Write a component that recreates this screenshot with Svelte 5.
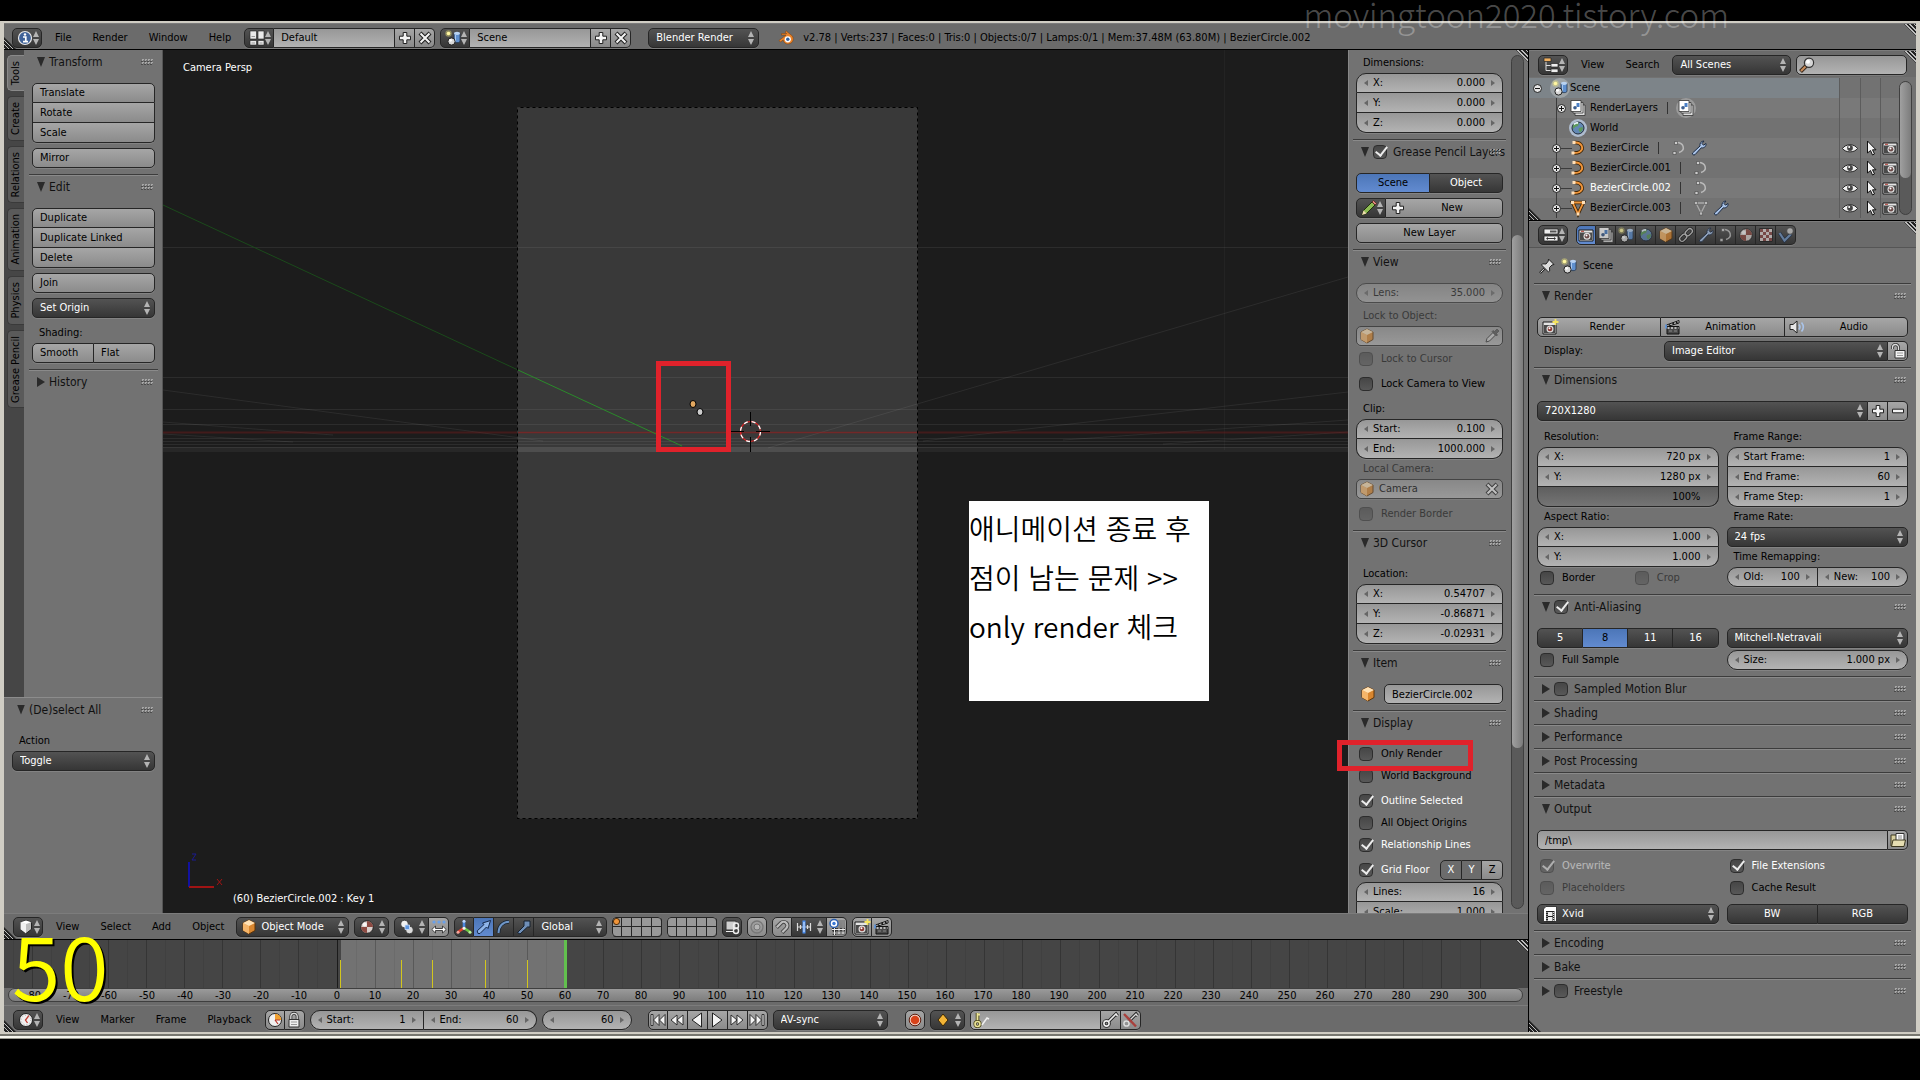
<!--
	Workspace: info bar, 3D view with tool shelf and properties region,
	timeline, outliner and render properties.
-->
<script lang="ts">
	const icons: Record<string, string> = {
		info: '<circle cx="8" cy="8" r="6.5" fill="#3f6299" stroke="#e8e8e8" stroke-width="1.2"/><path d="M6 7h2.8v4.5M6 11.7h5" stroke="#fff" stroke-width="1.7" fill="none"/><circle cx="8" cy="4.5" r="1.2" fill="#fff"/>',
		screen: '<path d="M1 1h6.500v8H1zM9 1h6v8H9zM1 10.500h6.500V15H1zM9 10.500h6V15H9z" fill="#e9e9e9" stroke="#222" stroke-width=".6"/><path d="M2.500 6.500h3.500M2.500 13h3.500M10.500 13h3" stroke="#999"/>',
		scene: '<circle cx="3.500" cy="3.500" r="3.200" fill="#e9e27a" opacity=".45"/><circle cx="3.500" cy="3.500" r="1.800" fill="#fff6a0"/><path d="M9 3.500v8c1 1.600 5 1.600 6 0v-8z" fill="#5f90cf" stroke="#26364d" stroke-width=".8"/><ellipse cx="12" cy="3.300" rx="3" ry="1.600" fill="#b9d3f2"/><path d="M10.500 5v6.500" stroke="#a9c8ee"/><circle cx="6.500" cy="11.500" r="3.600" fill="#d9d9d9" stroke="#222"/><circle cx="5.500" cy="10.300" r="1.400" fill="#fff"/>',
		plus: '<path d="M6.200 2.500h3.600v3.700h3.700v3.600H9.800v3.700H6.200V9.800H2.500V6.200h3.700z" fill="#f4f4f4" stroke="#222"/>',
		minus: '<path d="M2.500 6.200h11v3.600h-11z" fill="#f4f4f4" stroke="#222"/>',
		close: '<path d="M3 3l10 10M13 3L3 13" stroke="#222" stroke-width="4.200"/><path d="M3.500 3.500l9 9M12.500 3.500l-9 9" stroke="#f4f4f4" stroke-width="2"/>',
		blender: '<path d="M1 10.500l7-5.400H3.500V3.600h5.200L7 2.200 8.300 1l6 5c2 3 .6 6.500-2.300 7.600-3.400 1.200-6.500-.8-6.800-3.600L2.500 12z" fill="#e8822a" stroke="#7a3c08" stroke-width=".5"/><circle cx="9.800" cy="9.300" r="3.100" fill="#fff"/><circle cx="9.800" cy="9.300" r="1.700" fill="#2f62a3"/>',
		view3d: '<path d="M8 1.500l5.500 1.800v7L8 14.500l-5.500-4.200v-7z" fill="#bdbdbd" stroke="#222"/><path d="M8 5v9.500l-5.500-4.200v-7z" fill="#f1f1f1"/><path d="M2.500 3.300L8 1.500l5.500 1.800L8 5z" fill="#fff"/>',
		cube: '<path d="M8 1l6 3v7.500L8 15l-6-3.500V4z" fill="#d8862f" stroke="#5e3409"/><path d="M8 7v8l-6-3.500V4z" fill="#f4b56a"/><path d="M2 4l6-3 6 3-6 3z" fill="#ffe1b4"/>',
		material: '<circle cx="8" cy="8" r="6.300" fill="#d9cfcb" stroke="#222"/><path d="M8 2a6 6 0 0 1 6 6H8zM8 14a6 6 0 0 1-6-6h6z" fill="#8d4a42"/><circle cx="5.800" cy="5.400" r="2" fill="#fff" opacity=".8"/>',
		pivot: '<circle cx="5.500" cy="5" r="3.800" fill="#f1f1f1" stroke="#222" stroke-width=".7"/><circle cx="10.500" cy="11" r="3.800" fill="#dcdcdc" stroke="#222" stroke-width=".7"/><path d="M6 6h4.500v4.500H6z" fill="#5f97e0" stroke="#cfe0fa" stroke-width=".8"/>',
		centers: '<circle cx="3" cy="3" r="1.600" fill="#6aa0e8"/><circle cx="8" cy="3" r="1.600" fill="#6aa0e8"/><circle cx="13" cy="3" r="1.600" fill="#6aa0e8"/><path d="M.8 10.500L4.500 7v2.500h7V7l3.700 3.500-3.700 3.500v-2.500h-7V14z" fill="#fff" stroke="#222" stroke-width=".8"/>',
		axes: '<path d="M8 2v7" stroke="#4b86dd" stroke-width="2.600"/><path d="M8 9l-6 4" stroke="#e0402e" stroke-width="2.600"/><path d="M8 9l6 4" stroke="#6cc644" stroke-width="2.600"/><circle cx="8" cy="9.300" r="1.500" fill="#f2f2f2"/><circle cx="8" cy="2.200" r="1.500" fill="#bcd5fa"/><circle cx="2" cy="13.300" r="1.500" fill="#f6a59b"/><circle cx="14" cy="13.300" r="1.500" fill="#b7f09a"/>',
		translate: '<path d="M2 14.500l-.8-2.600L8 5.500 6.500 4 14.500 1.500 12 9.500 10.500 8 4 14.500z" fill="#8fb5ea" stroke="#14284a"/>',
		rotate: '<path d="M2.500 14C2.500 7.500 6.500 3 13 2.800" stroke="#14202f" stroke-width="3.600" fill="none"/><path d="M2.500 14C2.500 7.500 6.500 3 13 2.800" stroke="#6f96c7" stroke-width="2" fill="none"/>',
		scale: '<path d="M8 2h6v6H11.500L4 15 1.500 13.500 8 7z" fill="#6f8fb8" stroke="#14202f"/>',
		layerlock: '<path d="M2 2h10v9H2z" fill="#cfcfcf" stroke="#333"/><path d="M2 12.500h7" stroke="#eee"/><rect x="9.500" y="4" width="5" height="5.500" rx="2.500" fill="none" stroke="#eee" stroke-width="1.400"/><rect x="9.500" y="9" width="5" height="5.500" rx="2.500" fill="none" stroke="#eee" stroke-width="1.400"/>',
		proportional: '<circle cx="8" cy="8" r="6" fill="none" stroke="#777" stroke-width="1.300"/><circle cx="8" cy="8" r="3" fill="#b5b5b5" stroke="#777"/>',
		magnet: '<path d="M2.500 8.500L7 4a3.700 3.700 0 0 1 5.300 5.300L8 13.700" stroke="#444" stroke-width="4" fill="none"/><path d="M2.800 8.200L7 4a3.700 3.700 0 0 1 5.300 5.300L8.300 13.300" stroke="#bdbdbd" stroke-width="2.200" fill="none"/>',
		increment: '<path d="M1.500 4v8M4.500 6v4M11.500 6v4M14.500 4v8M1 8h14" stroke="#ddd" stroke-width="1.200"/><path d="M8 1.500v13" stroke="#4b8ff0" stroke-width="3"/><path d="M8 3v10" stroke="#e3eeff"/>',
		snapgrid: '<path d="M10 1v14M14 1v14M3 10.500h13M3 14h13M5.500 9v7" stroke="#222" stroke-width="2.400"/><path d="M10 1v14M14 1v14M3 10.500h13M3 14h13M5.500 9v7" stroke="#eee"/><circle cx="5" cy="4.500" r="4" fill="#fff" stroke="#2b5fb0" stroke-width="1.500"/><circle cx="5" cy="4.500" r="1.700" fill="#3a78d6"/>',
		camera: '<path d="M1 3h14v11H1z" fill="#e4e4e4" stroke="#1b1b1b"/><path d="M2 5.500h12V13H2z" fill="#4a4a4a"/><path d="M3 4.300h3" stroke="#b03a30"/><circle cx="9" cy="9.200" r="3.500" fill="#ddd"/><circle cx="9" cy="9.200" r="2.300" fill="#6b4a48"/><circle cx="8.500" cy="8.500" r="1" fill="#fff"/>',
		cameranew: '<path d="M1 3h13v12H1z" fill="#e4e4e4" stroke="#1b1b1b"/><path d="M2 6h11v8H2z" fill="#4a4a4a"/><circle cx="8" cy="10" r="3.500" fill="#ddd"/><circle cx="8" cy="10" r="2.300" fill="#8c3a34"/><circle cx="7.500" cy="9.300" r="1" fill="#fff"/><path d="M13.500 0v6M10.500 3h6" stroke="#f5e35c" stroke-width="1.800"/>',
		clapper: '<path d="M2 7.500h12V15H2z" fill="#4a4a4a" stroke="#111"/><path d="M1.500 6L14 1.500V4L2 7.500z" fill="#eee" stroke="#111"/><path d="M4 5.500l1.500 1M7.500 4.200L9 5.400M11 3l1.500 1.200" stroke="#111" stroke-width="1.500"/><path d="M2.500 9h11" stroke="#ddd" stroke-width="1.400" stroke-dasharray="2 1.500"/><path d="M4 12h3M9 12h3" stroke="#888"/><path d="M1 5.500v4" stroke="#5a96e4" stroke-width="1.600"/>',
		clock: '<circle cx="8" cy="8" r="6.500" fill="#f0f0f0" stroke="#222"/><path d="M11 3.500L7.500 8 9.500 11" stroke="#c23b32" stroke-width="1.300" fill="none"/><circle cx="8" cy="8" r="4.800" fill="none" stroke="#999" stroke-width=".8" stroke-dasharray="1 2"/>',
		clockrange: '<circle cx="8" cy="8" r="6.500" fill="#f0f0f0" stroke="#222"/><path d="M8 8V1.700A6.300 6.300 0 0 1 14.300 8z" fill="#f0a030"/><path d="M8 8h5M8 8l3 4" stroke="#b7362c" stroke-width="1.200"/>',
		lock: '<path d="M4.800 8V4.500a3.200 3.200 0 0 1 6.400 0V8" fill="none" stroke="#333" stroke-width="3"/><path d="M4.800 8V4.500a3.200 3.200 0 0 1 6.400 0V8" fill="none" stroke="#ddd" stroke-width="1.300"/><path d="M3 7.500h10V15H3z" fill="#eee" stroke="#333"/><path d="M5 10h6M5 12.500h6" stroke="#999"/>',
		unlock: '<path d="M8.500 8V4.500a3 3 0 0 0-6 0V6" fill="none" stroke="#333" stroke-width="3"/><path d="M8.500 8V4.500a3 3 0 0 0-6 0V6" fill="none" stroke="#ddd" stroke-width="1.300"/><path d="M5 7.500h10V15H5z" fill="#f2f2f2" stroke="#333"/><path d="M7 10h6M7 12.500h6" stroke="#999"/>',
		first: '<path d="M1 2.500h2v11H1zM9 2.500v11L3.500 8zM15 2.500v11L9.500 8z" fill="#f4f4f4" stroke="#222" stroke-width=".9"/>',
		prevkey: '<path d="M8 3v10L2 8zM14 3v10L8 8z" fill="#f4f4f4" stroke="#222" stroke-width=".9"/>',
		reverse: '<path d="M12.500 1v14L3 8z" fill="#f4f4f4" stroke="#222"/>',
		play: '<path d="M3.500 1v14L13 8z" fill="#f4f4f4" stroke="#222"/>',
		nextkey: '<path d="M2 3v10l6-5zM8 3v10l6-5z" fill="#f4f4f4" stroke="#222" stroke-width=".9"/>',
		last: '<path d="M13 2.500h2v11h-2zM1 2.500v11L6.500 8zM7 2.500v11L12.500 8z" fill="#f4f4f4" stroke="#222" stroke-width=".9"/>',
		record: '<circle cx="8" cy="8" r="5.800" fill="#efd2c8" stroke="#5e1d0d"/><circle cx="8" cy="8" r="4.300" fill="#d8431a"/>',
		diamond: '<path d="M8 2l5 6-5 6-5-6z" fill="#f2b436" stroke="#3a2705"/>',
		keyset: '<path d="M4.500 1v9" stroke="#4a4518" stroke-width="3.600"/><path d="M4.500 1v9M4.500 2.500H7" stroke="#ece59a" stroke-width="1.800"/><circle cx="4.500" cy="12" r="2.500" fill="none" stroke="#4a4518" stroke-width="3.200"/><circle cx="4.500" cy="12" r="2.500" fill="none" stroke="#ece59a" stroke-width="1.600"/><path d="M9 13l5-7 2 1" stroke="#eee" stroke-width="1.500" fill="none"/>',
		key: '<path d="M6.500 9.500L14 2l1.500 2" stroke="#222" stroke-width="3.400" fill="none"/><circle cx="4.500" cy="11.500" r="2.600" fill="none" stroke="#222" stroke-width="3.400"/><path d="M6.500 9.500L14 2l1.500 2" stroke="#eee" stroke-width="1.600" fill="none"/><circle cx="4.500" cy="11.500" r="2.600" fill="none" stroke="#eee" stroke-width="1.600"/>',
		keydel: '<path d="M6.500 9.500L14 2l1.500 2" stroke="#222" stroke-width="3.200" fill="none"/><path d="M6.500 9.500L14 2l1.500 2" stroke="#ddd" stroke-width="1.400" fill="none"/><circle cx="4.500" cy="11.500" r="2.600" fill="none" stroke="#ddd" stroke-width="1.500"/><path d="M2 2l12 12.500" stroke="#a8403c" stroke-width="2.400"/>',
		outliner: '<path d="M3 4v9.500h5M3 8.500h5" stroke="#ddd" fill="none"/><path d="M1 1h7v3.500H1z" fill="#f0b060" stroke="#222" stroke-width=".7"/><path d="M8 6.500h7V10H8zM8 12h7v3.500H8z" fill="#eee" stroke="#222" stroke-width=".7"/>',
		search: '<path d="M7 9L1.500 14.500" stroke="#3a2a1c" stroke-width="4"/><path d="M7 9L2 14" stroke="#c98d5c" stroke-width="2"/><circle cx="10" cy="5.800" r="4.600" fill="#d6d6d6" stroke="#333" stroke-width="1.200"/><circle cx="9" cy="4.800" r="2" fill="#fff"/>',
		layers: '<path d="M5 5h10v10.500H5z" fill="#ddd" stroke="#333" stroke-width=".8"/><path d="M3 2.500h10V13H3z" fill="#eee" stroke="#333" stroke-width=".8"/><path d="M1 .5h10v11H1z" fill="#fff" stroke="#333" stroke-width=".8"/><path d="M6.500 3h3v4h-3z" fill="#4b80c6"/><circle cx="5" cy="7.800" r="1.800" fill="#3d5f8f"/>',
		world: '<circle cx="8" cy="8" r="6" fill="#6288b4" stroke="#222b38"/><path d="M4 4c2-2 4-2 5-1L8 6 5 7 3.500 9C2 7 3 5 4 4zM9 8l3.500-1c1 2-.5 4.500-2.500 5.500L8.500 10z" fill="#5d9a5c"/><path d="M4 4.500C5 3 7 2.800 8 3" stroke="#e7f1fa" stroke-width="1.800" fill="none"/>',
		curve: '<path d="M4.500 2.500C12 2 14.500 9 9.500 12 8 13 6 13 4 13" stroke="#3b2204" stroke-width="3.400" fill="none"/><path d="M4.500 2.500C12 2 14.500 9 9.500 12 8 13 6 13 4 13" stroke="#f0953a" stroke-width="1.900" fill="none"/><path d="M2.500 1h3v3h-3zM1.500 11.500h3v3h-3z" fill="#ffe0b8"/>',
		curvedata: '<path d="M5 2.500C13 2 15 10.500 8 12.500" stroke="#b9b9b9" stroke-width="1.500" fill="none"/><path d="M3.500 1.500h3v3h-3zM2 11.500h3v3H2z" fill="#ccc" stroke="#444" stroke-width=".6"/>',
		mesh: '<path d="M2.500 2.500h11L8 14z" fill="none" stroke="#3b2204" stroke-width="3.400"/><path d="M2.500 2.500h11L8 14z" fill="none" stroke="#f0953a" stroke-width="1.800"/><path d="M1 1h3v3H1zM12 1h3v3h-3zM6.500 12.500h3v3h-3z" fill="#ffe0b8"/>',
		meshdata: '<path d="M3 3h10L8 13z" fill="none" stroke="#aaa" stroke-width="1.300"/><path d="M1.500 1.500h3v3h-3zM11.500 1.500h3v3h-3zM6.500 12h3v3h-3z" fill="#bbb" stroke="#444" stroke-width=".5"/>',
		wrench: '<path d="M1.500 13L9 6c-.6-2.600 1.200-5 4-5L11 3.500l1.500 1.700L15 3.500c.5 2.800-2 5-4.700 4.300L4 14.700C2.500 15.500.8 14.500 1.500 13z" fill="#a9c3e8" stroke="#1d2c44"/>',
		eye: '<path d="M.5 8.500C3.500 3.500 12.500 3.500 15.500 8.500 12.500 13 3.500 13 .5 8.500z" fill="#f0f0f0" stroke="#222"/><circle cx="8" cy="8" r="2.900" fill="#444"/><circle cx="7.200" cy="7" r="1" fill="#fff"/>',
		pointer: '<path d="M4.500 1v12l3-2.500 2 4.500 2-1-2-4.200h3.500z" fill="#f4f4f4" stroke="#111"/>',
		properties: '<path d="M1 2h14v5H1zM1 9h14v5H1z" fill="#eee" stroke="#222" stroke-width=".8"/><path d="M7 3.500h6.500v2H7z" fill="#555"/><path d="M3 11.500l2-1.500v3zM13 11.500L11 10v3z" fill="#333"/><path d="M5 11.500h6" stroke="#333"/>',
		link: '<g transform="rotate(-45 8 8)" fill="none"><rect x="0" y="5.500" width="8" height="5" rx="2.500" stroke="#222" stroke-width="3"/><rect x="8" y="5.500" width="8" height="5" rx="2.500" stroke="#222" stroke-width="3"/><rect x="0" y="5.500" width="8" height="5" rx="2.500" stroke="#c8c8c8" stroke-width="1.300"/><rect x="8" y="5.500" width="8" height="5" rx="2.500" stroke="#c8c8c8" stroke-width="1.300"/></g>',
		texture: '<path d="M1.500 1.500h13v13h-13z" fill="#e0d6d4" stroke="#222"/><path d="M2 2h3v3H2zM8 2h3v3H8zM5 5h3v3H5zM11 5h3v3h-3zM2 8h3v3H2zM8 8h3v3H8zM5 11h3v3H5zM11 11h3v3h-3z" fill="#8d4a48"/>',
		physics: '<path d="M1.500 6l5 7.500L13 7" stroke="#1d2c44" stroke-width="3.600" fill="none"/><path d="M1.500 6l5 7.500L13 7" stroke="#7296c4" stroke-width="2.200" fill="none"/><circle cx="12" cy="4" r="3.300" fill="#cfcfcf" stroke="#333" stroke-width=".7"/>',
		pin: '<path d="M5.500 10.500L1 15" stroke="#222" stroke-width="2.400"/><path d="M9.500 1l5.500 5.500-2 .5-2.500 2.500.2 3.500-1.200 1L2.500 7l1-1.200 3.500.2L9.200 3.200z" fill="#ddd" stroke="#222"/><path d="M5 10.800L1.500 14.500" stroke="#ddd"/>',
		speaker: '<path d="M1 5.500h3L8 2v12l-4-3.500H1z" fill="#e6e6e6" stroke="#222"/><path d="M10 5.500c1.200 1.500 1.200 3.500 0 5M12.500 3.500c2.200 2.700 2.200 6.300 0 9" stroke="#a9c3e8" stroke-width="1.600" fill="none"/>',
		folder: '<path d="M1 3h5l1 1.500V14H1z" fill="#d8cf9e" stroke="#3c3820"/><path d="M6 1.500h8V10H6z" fill="#fff" stroke="#333"/><path d="M8 4h4M8 6h4" stroke="#888"/><path d="M3 8h12.500L14 14.500H1.500z" fill="#e6deb2" stroke="#3c3820"/>',
		film: '<path d="M4 .5h10.500v15H1.500V3z" fill="#fff" stroke="#222" stroke-width=".8"/><path d="M4 5h8.500v10.500H4z" fill="#222"/><path d="M6 6h4.500v4H6zM6 11h4.500v4H6z" fill="#eee"/><path d="M5 6v9M11.600 6v9" stroke="#eee" stroke-dasharray="1 1"/>',
		pencil: '<path d="M1 15l1.500-4.500L11 2l3 3-8.500 8.500z" fill="#8dbb54" stroke="#20300c"/><path d="M11 2l1.500-1.500 3 3L14 5z" fill="#e08a80" stroke="#4a1a14" stroke-width=".7"/><path d="M1 15l1.500-4.500 3 3z" fill="#f0dcb0"/>',
		dropper: '<path d="M2 14l1-3.500L9 4.500l2.500 2.500-6 6z" fill="#ccc" stroke="#333"/><path d="M8 3.500l1-1 1.500 1L13 1l2 2-2.500 2.500 1 1.500-1 1z" fill="#555" stroke="#333" stroke-width=".6"/>'
	};

	const tabs = ['Tools', 'Create', 'Relations', 'Animation', 'Physics', 'Grease Pencil'];
	const contexts = ['camera', 'layers', 'scene', 'world', 'cube', 'link', 'wrench', 'curvedata', 'material', 'texture', 'physics'];
	const contextNames = ['Render', 'Render layers', 'Scene', 'World', 'Object', 'Constraints', 'Modifiers', 'Data', 'Material', 'Texture', 'Physics'];
	const objects = [
		{ name: 'BezierCircle', glyph: 'curve', extra: ['curvedata', 'wrench'] },
		{ name: 'BezierCircle.001', glyph: 'curve', extra: ['curvedata'] },
		{ name: 'BezierCircle.002', glyph: 'curve', extra: ['curvedata'], active: true },
		{ name: 'BezierCircle.003', glyph: 'mesh', extra: ['meshdata', 'wrench'] }
	];
	const transport = [
		['first', 'Jump to start'],
		['prevkey', 'Previous keyframe'],
		['reverse', 'Play reverse'],
		['play', 'Play'],
		['nextkey', 'Next keyframe'],
		['last', 'Jump to end']
	];

	// timeline: frame number -> share of the strip's width
	const at = (frame: number, step = 3.81) => `${((333 + frame * step) / 1524) * 100}%`;
	const ticks = Array.from({ length: 78 }, (_, i) => (i - 17) * 5);
	const labels = Array.from({ length: 39 }, (_, i) => (i - 8) * 10);
	const keys = [1, 17, 25, 39, 50];

	const gridRows = [197, 327, 359, 374, 388, 391, 394, 397];
</script>

{#snippet icon(name)}
	<svg class="icon" viewBox="0 0 16 16" aria-hidden="true">{@html icons[name]}</svg>
{/snippet}

{#snippet updown()}
	<svg class="updown" viewBox="0 0 6 14" aria-hidden="true"><path d="M3 0l3 6H0zM3 14l3-6H0z" /></svg>
{/snippet}

{#snippet picker(name, glyph, cls = '')}
	<button class="picker {cls}" aria-label={name}>{@render icon(glyph)}{@render updown()}</button>
{/snippet}

{#snippet menu(name, value, cls = '', glyph = '')}
	<span class="menu {cls}">
		{#if glyph}{@render icon(glyph)}{/if}
		<select aria-label={name}><option>{value}</option></select>
		{@render updown()}
	</span>
{/snippet}

{#snippet num(name, value, cls = '', disabled = false)}
	<label class="num {cls}" class:off={disabled}>
		<i class="left"></i>
		<span>{name}</span>
		<input type="text" {value} {disabled} aria-label={name || 'Value'} />
		<i class="right"></i>
	</label>
{/snippet}

{#snippet check(name, checked = false, disabled = false)}
	<label class="check" class:off={disabled} class:on={checked}>
		<input type="checkbox" {checked} {disabled} />
		<span>{name}</span>
	</label>
{/snippet}

{#snippet head(name, open = true)}
	<h2 class="head">
		<button aria-expanded={open}><i class="tri" class:open></i>{name}</button>
		<i class="dots"></i>
	</h2>
{/snippet}

{#snippet checkhead(name, open, checked)}
	<h2 class="head">
		<button aria-expanded={open} aria-label={name}><i class="tri" class:open></i></button>
		<label class="headcheck"><input type="checkbox" {checked} /><span>{name}</span></label>
		<i class="dots"></i>
	</h2>
{/snippet}

{#snippet menus(names)}
	<nav class="menus">
		{#each names as name}<button>{name}</button>{/each}
	</nav>
{/snippet}

<div class="page">
	<div class="window">
		<header class="bar info">
			{@render picker('Editor type', 'info')}
			{@render menus(['File', 'Render', 'Window', 'Help'])}
			<div class="row idblock">
				{@render picker('Screen', 'screen')}
				<input class="text" type="text" value="Default" aria-label="Screen name" />
				<button class="btn sq" aria-label="Add screen">{@render icon('plus')}</button>
				<button class="btn sq" aria-label="Delete screen">{@render icon('close')}</button>
			</div>
			<div class="row idblock">
				{@render picker('Scene', 'scene')}
				<input class="text" type="text" value="Scene" aria-label="Scene name" />
				<button class="btn sq" aria-label="Add scene">{@render icon('plus')}</button>
				<button class="btn sq" aria-label="Delete scene">{@render icon('close')}</button>
			</div>
			{@render menu('Render engine', 'Blender Render', 'engine')}
			<div class="stats">
				{@render icon('blender')}
				<span>v2.78 | Verts:237 | Faces:0 | Tris:0 | Objects:0/7 | Lamps:0/1 | Mem:37.48M (63.80M) | BezierCircle.002</span>
			</div>
			<i class="grip bl"></i><i class="grip tr"></i>
		</header>

		<div class="areas">
			<div class="main">
				<section class="view">
					<aside class="shelf">
						<div class="shelftop">
							<div class="tabs">
								{#each tabs as tab, i}
									<button class:active={i === 0}><span>{tab}</span></button>
								{/each}
							</div>
							<div class="tools">
								<section class="panel">
									{@render head('Transform')}
									<div class="body">
										<div class="col">
											<button class="btn">Translate</button>
											<button class="btn">Rotate</button>
											<button class="btn">Scale</button>
										</div>
										<button class="btn">Mirror</button>
									</div>
								</section>
								<section class="panel">
									{@render head('Edit')}
									<div class="body">
										<div class="col">
											<button class="btn">Duplicate</button>
											<button class="btn">Duplicate Linked</button>
											<button class="btn">Delete</button>
										</div>
										<button class="btn">Join</button>
										{@render menu('Set origin', 'Set Origin')}
										<div>
											<p class="label">Shading:</p>
											<div class="row">
												<button class="btn">Smooth</button>
												<button class="btn">Flat</button>
											</div>
										</div>
									</div>
								</section>
								<section class="panel">{@render head('History', false)}</section>
							</div>
						</div>
						<div class="operator">
							<section class="panel">
								{@render head('(De)select All')}
								<div class="body">
									<div>
										<p class="label">Action</p>
										{@render menu('Action', 'Toggle')}
									</div>
								</div>
							</section>
						</div>
					</aside>

					<div class="canvas">
						<svg class="scene" viewBox="0 0 1185 863" preserveAspectRatio="xMinYMin slice" aria-hidden="true">
							<rect width="1185" height="863" fill="#1c1c1c" />
							<rect x="355" y="57" width="400" height="711" fill="#393939" />
							<g stroke="#fff" stroke-opacity=".07">
								{#each gridRows as y}
									<path d="M0 {y}.5H1185" />
								{/each}
								<path d="M1185 227L605 398M0 340L380 391M1185 342L760 391M0 372L170 385M1185 370L900 390M0 384L130 392M1185 382L1000 394" />
								<path d="M1061.5 0V400" stroke-opacity=".03" />
							</g>
							<rect y="397" width="1185" height="5" fill="#fff" opacity=".05" />
							<rect x="355" y="398" width="400" height="4" fill="#fff" opacity=".06" />
							<path d="M0 382.500H1185" stroke="#8a1a1a" stroke-opacity=".35" stroke-width="2" />
							<path d="M355 382.500H755" stroke="#a02020" stroke-opacity=".4" />
							<path d="M0 155L355 320" stroke="#1b4a1b" />
							<path d="M355 320L519 396" stroke="#2a8a2a" />
							<rect x="354.500" y="57.500" width="400" height="711" fill="none" stroke="#000" />
							<rect x="354.500" y="57.500" width="400" height="711" fill="none" stroke="#555" stroke-dasharray="3 3" stroke-opacity=".6" />
							<ellipse cx="530" cy="354" rx="3" ry="3.500" fill="#e3a860" stroke="#000" />
							<ellipse cx="537" cy="362" rx="3" ry="3.500" fill="#ccc" stroke="#000" />
							<circle cx="587.500" cy="381.500" r="10" fill="none" stroke="#d22" stroke-width="1.200" />
							<circle cx="587.500" cy="381.500" r="10" fill="none" stroke="#fff" stroke-width="1.300" stroke-dasharray="4 4" />
							<path d="M587.500 362v14M587.500 387v15M567 381.500h14M593 381.500h14" stroke="#000" />
							<path d="M26 812V837" stroke="#1212a0" stroke-width="2" />
							<path d="M26 837H51" stroke="#a01414" stroke-width="2" />
							<path d="M54 829l5 6M59 829l-5 6" stroke="#a01414" />
							<path d="M29 804h4l-4 6h4" stroke="#1a1a90" fill="none" />
						</svg>
						<p class="hud top">Camera Persp</p>
						<p class="hud bottom">(60) BezierCircle.002 : Key 1</p>
						<div class="mark dots-mark"></div>
						<p class="note" lang="ko">애니메이션 종료 후<br />점이 남는 문제 &gt;&gt;<br />only render 체크</p>
					</div>

					<aside class="region">
						<div class="regionbody">
							<section class="panel first">
								<p class="label">Dimensions:</p>
								<div class="col">
									{@render num('X:', '0.000')}
									{@render num('Y:', '0.000')}
									{@render num('Z:', '0.000')}
								</div>
							</section>
							<section class="panel">
								{@render checkhead('Grease Pencil Layers', true, true)}
								<div class="body">
									<div class="row toggles">
										<button class="toggle active">Scene</button>
										<button class="toggle">Object</button>
									</div>
									<div class="row">
										{@render picker('Grease pencil data', 'pencil')}
										<button class="btn mid">{@render icon('plus')}<span>New</span></button>
									</div>
									<button class="btn mid">New Layer</button>
								</div>
							</section>
							<section class="panel">
								{@render head('View')}
								<div class="body">
									{@render num('Lens:', '35.000', '', true)}
									<div class="lockto">
										<p class="label off">Lock to Object:</p>
										<div class="text iconfield off">
											{@render icon('cube')}<input type="text" disabled aria-label="Lock to object" />{@render icon('dropper')}
										</div>
										<div class="after">{@render check('Lock to Cursor', false, true)}</div>
									</div>
									{@render check('Lock Camera to View')}
									<div>
										<p class="label">Clip:</p>
										<div class="col">
											{@render num('Start:', '0.100')}
											{@render num('End:', '1000.000')}
										</div>
										<p class="label off">Local Camera:</p>
										<div class="text iconfield off">
											{@render icon('cube')}<input type="text" value="Camera" disabled aria-label="Local camera" />{@render icon('close')}
										</div>
									</div>
									{@render check('Render Border', false, true)}
								</div>
							</section>
							<section class="panel">
								{@render head('3D Cursor')}
								<div class="body">
									<div>
										<p class="label">Location:</p>
										<div class="col">
											{@render num('X:', '0.54707')}
											{@render num('Y:', '-0.86871')}
											{@render num('Z:', '-0.02931')}
										</div>
									</div>
								</div>
							</section>
							<section class="panel">
								{@render head('Item')}
								<div class="body">
									<div class="itemrow">
										{@render icon('cube')}<input class="text" type="text" value="BezierCircle.002" aria-label="Object name" />
									</div>
								</div>
							</section>
							<section class="panel">
								{@render head('Display')}
								<div class="body">
									<div class="checks">
										{@render check('Only Render')}
										{@render check('World Background')}
									</div>
									<div class="checks">
										{@render check('Outline Selected', true)}
										{@render check('All Object Origins')}
										{@render check('Relationship Lines', true)}
									</div>
									<div class="checks">
										<div class="floor">
											{@render check('Grid Floor', true)}
											<div class="row axis">
												<button class="btn pressed">X</button>
												<button class="btn pressed">Y</button>
												<button class="btn">Z</button>
											</div>
										</div>
										<div class="col">
											{@render num('Lines:', '16')}
											{@render num('Scale:', '1.000')}
										</div>
									</div>
								</div>
							</section>
						</div>
						<div class="track"><i class="thumb"></i></div>
						<i class="grip tr"></i>
					</aside>
					<div class="mark check-mark"></div>
				</section>

				<div class="bar viewbar">
					{@render picker('Editor type', 'view3d')}
					{@render menus(['View', 'Select', 'Add', 'Object'])}
					{@render menu('Mode', 'Object Mode', 'mode', 'cube')}
					{@render picker('Viewport shading', 'material', 'wide')}
					<div class="row tight">
						{@render picker('Pivot point', 'pivot', 'wide')}
						<button class="btn sq" aria-label="Manipulate centers">{@render icon('centers')}</button>
					</div>
					<div class="row tight">
						<button class="toggle sq" aria-label="Manipulator">{@render icon('axes')}</button>
						<button class="toggle sq active" aria-label="Translate">{@render icon('translate')}</button>
						<button class="toggle sq" aria-label="Rotate">{@render icon('rotate')}</button>
						<button class="toggle sq" aria-label="Scale">{@render icon('scale')}</button>
						{@render menu('Orientation', 'Global', 'orient')}
					</div>
					{#each [0, 1] as block}
						<div class="layers">
							{#each Array(10) as _, i}
								<button aria-label="Layer {block * 10 + i + 1}" class:used={block === 0 && i === 0}></button>
							{/each}
						</div>
					{/each}
					<button class="toggle sq" aria-label="Lock camera and layers">{@render icon('layerlock')}</button>
					<button class="btn sq" aria-label="Proportional editing">{@render icon('proportional')}</button>
					<div class="row tight">
						<button class="btn sq" aria-label="Snap">{@render icon('magnet')}</button>
						{@render picker('Snap element', 'increment', 'wide')}
						<button class="btn sq" aria-label="Absolute grid snap">{@render icon('snapgrid')}</button>
					</div>
					<div class="row tight">
						<button class="btn sq" aria-label="Render image">{@render icon('cameranew')}</button>
						<button class="btn sq" aria-label="Render animation">{@render icon('clapper')}</button>
					</div>
					<i class="grip bl"></i>
				</div>

				<section class="timeline">
					<svg class="strip" aria-hidden="true">
						<rect x={at(1)} y="0" width="14.7%" height="48" fill="#727272" />
						{#each ticks as frame}
							<line x1={at(frame)} x2={at(frame)} y1="0" y2="48" stroke="#000" stroke-opacity={frame % 10 ? 0.06 : 0.22} />
						{/each}
						<line x1={at(0)} x2={at(0)} y1="0" y2="48" stroke="#111" stroke-opacity=".7" />
						{#each keys as frame}
							<line x1={at(frame)} x2={at(frame)} y1="20" y2="48" stroke="#d2c61e" />
						{/each}
						<line x1={at(60)} x2={at(60)} y1="0" y2="48" stroke="#62c04e" stroke-width="3" />
					</svg>
					<div class="ruler">
						{#each labels as frame}
							{#if frame <= 300}<span style="left: {at(frame, 3.8)}">{frame}</span>{/if}
						{/each}
					</div>
					<i class="grip tr"></i>
				</section>

				<footer class="bar timebar">
					{@render picker('Editor type', 'clock')}
					{@render menus(['View', 'Marker', 'Frame', 'Playback'])}
					<div class="row tight">
						<button class="btn sq" aria-label="Use preview range">{@render icon('clockrange')}</button>
						<button class="btn sq" aria-label="Lock time to range">{@render icon('lock')}</button>
					</div>
					<div class="row range">
						{@render num('Start:', '1')}
						{@render num('End:', '60')}
					</div>
					{@render num('', '60', 'current')}
					<div class="row tight transport">
						{#each transport as [glyph, name]}
							<button class="btn sq" aria-label={name}>{@render icon(glyph)}</button>
						{/each}
					</div>
					{@render menu('Sync', 'AV-sync', 'sync')}
					<button class="btn sq record" aria-label="Auto keyframe">{@render icon('record')}</button>
					{@render picker('Keyframe type', 'diamond', 'wide')}
					<div class="row keying">
						<label class="text iconfield">{@render icon('keyset')}<input type="text" aria-label="Active keying set" /></label>
						<button class="btn sq" aria-label="Insert keyframe">{@render icon('key')}</button>
						<button class="btn sq" aria-label="Delete keyframe">{@render icon('keydel')}</button>
					</div>
					<i class="grip bl"></i>
				</footer>
			</div>

			<div class="side">
				<div class="bar sidebar">
					{@render picker('Editor type', 'outliner')}
					{@render menus(['View', 'Search'])}
					{@render menu('Display mode', 'All Scenes', 'scenes')}
					<label class="text iconfield find">{@render icon('search')}<input type="text" aria-label="Filter" /></label>
					<i class="grip tr"></i>
				</div>
				<section class="outliner">
					<ul>
						<li class="scene-row">
							<div class="cell"><i class="exp minus"></i><span class="halo">{@render icon('scene')}</span><span>Scene</span></div>
							<i></i><i></i><i></i>
						</li>
						<li>
							<div class="cell lv1"><i class="exp"></i>{@render icon('layers')}<span>RenderLayers</span><b></b><span class="halo">{@render icon('layers')}</span></div>
							<i></i><i></i><i></i>
						</li>
						<li>
							<div class="cell lv1 leaf"><span class="halo blue">{@render icon('world')}</span><span>World</span></div>
							<i></i><i></i><i></i>
						</li>
						{#each objects as object}
							<li>
								<div class="cell lv2" class:active={object.active}>
									<i class="exp"></i>{@render icon(object.glyph)}<span>{object.name}</span><b></b>
									{#each object.extra as extra}{@render icon(extra)}{/each}
								</div>
								<i>{@render icon('eye')}</i><i>{@render icon('pointer')}</i><i>{@render icon('camera')}</i>
							</li>
						{/each}
					</ul>
					<div class="track"><i class="thumb"></i></div>
					<i class="grip bl"></i>
				</section>

				<div class="bar sidebar props">
					{@render picker('Editor type', 'properties')}
					<div class="row tight contexts">
						{#each contexts as glyph, i}
							<button class="toggle sq" class:active={i === 0} aria-label={contextNames[i]}>{@render icon(glyph)}</button>
						{/each}
					</div>
					<i class="grip tr"></i>
				</div>
				<section class="properties">
					<div class="crumb">{@render icon('pin')}{@render icon('scene')}<span>Scene</span></div>
					<section class="panel">
						{@render head('Render')}
						<div class="body g4">
							<div class="row">
								<button class="btn mid">{@render icon('cameranew')}<span>Render</span></button>
								<button class="btn mid">{@render icon('clapper')}<span>Animation</span></button>
								<button class="btn mid">{@render icon('speaker')}<span>Audio</span></button>
							</div>
							<div class="display">
								<p class="label">Display:</p>
								<div class="row">
									{@render menu('Display', 'Image Editor')}
									<button class="btn sq" aria-label="Lock interface">{@render icon('unlock')}</button>
								</div>
							</div>
						</div>
					</section>
					<section class="panel">
						{@render head('Dimensions')}
						<div class="body g6">
							<div class="row">
								{@render menu('Preset', '720X1280')}
								<button class="btn sq" aria-label="Add preset">{@render icon('plus')}</button>
								<button class="btn sq" aria-label="Remove preset">{@render icon('minus')}</button>
							</div>
							<div class="split">
								<div>
									<p class="label">Resolution:</p>
									<div class="col">
										{@render num('X:', '720 px')}
										{@render num('Y:', '1280 px')}
										{@render num('', '100%', 'slider')}
									</div>
									<p class="label">Aspect Ratio:</p>
									<div class="col">
										{@render num('X:', '1.000')}
										{@render num('Y:', '1.000')}
									</div>
									<div class="split even">
										{@render check('Border')}
										{@render check('Crop', false, true)}
									</div>
								</div>
								<div>
									<p class="label">Frame Range:</p>
									<div class="col">
										{@render num('Start Frame:', '1')}
										{@render num('End Frame:', '60')}
										{@render num('Frame Step:', '1')}
									</div>
									<p class="label">Frame Rate:</p>
									{@render menu('Frame rate', '24 fps')}
									<p class="label">Time Remapping:</p>
									<div class="row">
										{@render num('Old:', '100')}
										{@render num('New:', '100')}
									</div>
								</div>
							</div>
						</div>
					</section>
					<section class="panel">
						{@render checkhead('Anti-Aliasing', true, true)}
						<div class="body">
							<div class="split">
								<div class="checks">
									<div class="row toggles">
										<button class="toggle">5</button>
										<button class="toggle active">8</button>
										<button class="toggle">11</button>
										<button class="toggle">16</button>
									</div>
									{@render check('Full Sample')}
								</div>
								<div class="checks">
									{@render menu('Filter', 'Mitchell-Netravali')}
									{@render num('Size:', '1.000 px')}
								</div>
							</div>
						</div>
					</section>
					<section class="panel">{@render checkhead('Sampled Motion Blur', false, false)}</section>
					<section class="panel">{@render head('Shading', false)}</section>
					<section class="panel">{@render head('Performance', false)}</section>
					<section class="panel">{@render head('Post Processing', false)}</section>
					<section class="panel">{@render head('Metadata', false)}</section>
					<section class="panel">
						{@render head('Output')}
						<div class="body g6">
							<div class="row">
								<input class="text" type="text" value="/tmp\" aria-label="Output path" />
								<button class="btn sq" aria-label="Browse">{@render icon('folder')}</button>
							</div>
							<div class="split">
								<div class="checks">
									{@render check('Overwrite', true, true)}
									{@render check('Placeholders', false, true)}
								</div>
								<div class="checks">
									{@render check('File Extensions', true)}
									{@render check('Cache Result')}
								</div>
							</div>
							<div class="split">
								{@render menu('File format', 'Xvid', '', 'film')}
								<div class="row toggles">
									<button class="toggle">BW</button>
									<button class="toggle">RGB</button>
								</div>
							</div>
						</div>
					</section>
					<section class="panel">{@render head('Encoding', false)}</section>
					<section class="panel">{@render head('Bake', false)}</section>
					<section class="panel">{@render checkhead('Freestyle', false, false)}</section>
					<i class="grip bl"></i>
				</section>
			</div>
		</div>
	</div>

	<p class="watermark">movingtoon2020.tistory.com</p>
	<p class="count">50</p>
</div>

<style>
	:global(body) {
		background: #000;
		overflow: hidden;
	}

	.page {
		--face: linear-gradient(#a6a6a6, #8b8b8b);
		--field: linear-gradient(#979797, #b3b3b3);
		--dark: linear-gradient(#535353, #363636);
		--blue: linear-gradient(#4c76b8, #628bd0);
		--line: #262626;
		position: relative;
		box-sizing: border-box;
		height: 100vh;
		padding: 21px 0 41px;
		background: #000;
		color: #000;
		font-family: "DejaVu Sans Condensed", "DejaVu Sans", sans-serif;
		font-size: 11px;
		line-height: 20px;
	}

	.page :global(*) {
		box-sizing: border-box;
	}

	p,
	h2,
	ul {
		margin: 0;
		padding: 0;
		font-weight: normal;
	}

	button,
	input,
	select {
		margin: 0;
		padding: 0;
		border: 0;
		background: none;
		color: inherit;
		font: inherit;
		line-height: 18px;
		appearance: none;
	}

	input,
	select {
		min-width: 0;
		width: 100%;
	}

	.icon {
		flex: none;
		display: block;
		width: 16px;
		height: 16px;
		overflow: visible;
	}

	.window {
		display: flex;
		flex-direction: column;
		height: 100%;
		padding: 2px 4px 7px;
		background: linear-gradient(to top, #99998f 0 1px, #f6f6ee 1px 3px, #77776f 3px 5px, #cfccc2 5px 7px, #d0cdc4 7px);
	}

	.areas {
		flex: 1;
		display: grid;
		grid-template-columns: minmax(0, 1fr) 388px;
		min-height: 0;
	}

	.main {
		display: flex;
		flex-direction: column;
		min-height: 0;
		min-width: 0;
	}

	/* header bars */
	.bar {
		position: relative;
		flex: none;
		display: flex;
		align-items: center;
		gap: 5px;
		height: 27px;
		padding: 1px 9px 0;
		border-top: 1px solid #7c7c7c;
		background: #6b6b6b;
	}

	.info,
	.viewbar {
		border-bottom: 1px solid #000;
	}

	.info {
		padding: 2px 8px 0;
	}

	.menus {
		display: flex;
		gap: 1px;
		margin: 0 -3px 0 -2px;
	}

	.info .menus {
		margin-right: -2px;
	}

	.menus button {
		padding: 0 10px;
	}

	.stats {
		display: flex;
		align-items: center;
		gap: 9px;
		margin-left: 14px;
		white-space: nowrap;
	}

	/* widgets */
	.btn,
	.toggle,
	.picker,
	.menu,
	.text,
	.num {
		display: flex;
		align-items: center;
		height: 20px;
		border: 1px solid var(--line);
		border-radius: 5px;
		background: var(--face);
		box-shadow: 0 1px 0 rgb(255 255 255 / 12%);
	}

	.btn {
		padding: 0 7px;
	}

	.btn.mid {
		justify-content: center;
		padding: 0 4px;
	}

	.btn.mid span {
		flex: 1;
		text-align: center;
	}

	.btn.pressed {
		background: #6c6c6c;
		color: #fff;
	}

	.sq,
	.btn.sq {
		flex: none;
		justify-content: center;
		width: 20px;
		padding: 0;
	}

	.toggle,
	.picker,
	.menu {
		background: var(--dark);
		color: #fff;
	}

	.toggle {
		justify-content: center;
	}

	.toggle.active {
		background: var(--blue);
		color: #000;
	}

	.picker {
		flex: none;
		justify-content: space-between;
		width: 30px;
		padding: 0 3px 0 4px;
	}

	.picker.wide {
		width: 35px;
	}

	.updown {
		flex: none;
		width: 6px;
		height: 14px;
		fill: #b4b4b4;
	}

	.menu {
		padding: 0 4px 0 7px;
	}

	.menu .icon {
		margin: 0 4px 0 -3px;
	}

	.menu option {
		color: #000;
	}

	.text {
		padding: 0 7px;
		background: var(--field);
	}

	.iconfield {
		padding: 0 2px;
		gap: 4px;
	}

	.num {
		padding: 0 6px;
		border-radius: 10px;
		background: var(--field);
		white-space: nowrap;
	}

	.num input {
		flex: 1;
		text-align: right;
	}

	.num i {
		flex: none;
		border: 3px solid transparent;
	}

	.num .left {
		margin-right: 5px;
		margin-left: -2px;
		border-right: 4px solid #666;
	}

	.num .right {
		margin-left: 6px;
		margin-right: -2px;
		border-left: 4px solid #666;
	}

	.num.slider {
		background: linear-gradient(#5e5e5e, #757575);
	}

	.num.slider i {
		visibility: hidden;
	}

	.off {
		opacity: 0.5;
	}

	.text.off {
		opacity: 0.6;
	}

	.label {
		height: 20px;
		padding-left: 7px;
	}

	.col {
		display: flex;
		flex-direction: column;
	}

	.col > :global(* + *) {
		border-top: 0;
		border-top-left-radius: 0;
		border-top-right-radius: 0;
	}

	.col > :global(:not(:last-child)) {
		border-bottom-left-radius: 0;
		border-bottom-right-radius: 0;
	}

	.row {
		display: flex;
	}

	.row > :global(*) {
		flex: 1 1 0;
	}

	.row > :global(.sq),
	.row > :global(.picker),
	.tight > :global(*) {
		flex: none;
	}

	.row > :global(* + *) {
		border-left: 0;
		border-top-left-radius: 0;
		border-bottom-left-radius: 0;
	}

	.row > :global(:not(:last-child)) {
		border-top-right-radius: 0;
		border-bottom-right-radius: 0;
	}

	.check,
	.headcheck {
		display: flex;
		align-items: center;
		gap: 8px;
		height: 20px;
		padding-left: 3px;
		white-space: nowrap;
	}

	.check.on {
		color: #fff;
	}

	input[type="checkbox"] {
		position: relative;
		flex: none;
		width: 14px;
		height: 14px;
		border: 1px solid #2d2d2d;
		border-radius: 4px;
		background: linear-gradient(#464646, #585858);
	}

	input[type="checkbox"]:checked::after {
		content: "";
		position: absolute;
		top: -2px;
		left: 4px;
		width: 5px;
		height: 10px;
		border: solid #ececec;
		border-width: 0 2px 2px 0;
		transform: rotate(38deg);
	}

	.checks {
		display: grid;
		grid-template-columns: minmax(0, 1fr);
		gap: 2px;
	}

	/* panels */
	.panel {
		margin: 0 5px;
	}

	.panel + .panel,
	.crumb + .panel {
		margin-top: -1px;
		border-top: 1px solid #3c3c3c;
		box-shadow: inset 0 1px 0 #8a8a8a;
	}

	.head {
		display: flex;
		align-items: center;
		height: 24px;
		padding: 0 5px 0 8px;
		font-size: 12px;
		color: #111;
	}

	.head button {
		display: flex;
		align-items: center;
		gap: 4px;
		white-space: nowrap;
	}

	.headcheck {
		gap: 6px;
		width: 0;
		padding-left: 4px;
		overflow: visible;
	}

	.tri {
		width: 8px;
		height: 10px;
		background: #2a2a2a;
		clip-path: polygon(0 0, 100% 50%, 0 100%);
	}

	.tri.open {
		clip-path: polygon(0 0, 100% 0, 50% 100%);
	}

	.dots {
		width: 12px;
		height: 6px;
		margin-left: auto;
		background: conic-gradient(#ccc 25%, transparent 0 50%, #333 0 75%, transparent 0) 0 0 / 3px 3px;
		opacity: 0.6;
	}

	.body {
		display: flex;
		flex-direction: column;
		gap: 5px;
		padding: 9px 3px 7px;
	}

	.g4 {
		gap: 4px;
	}

	.g6 {
		gap: 6px;
	}

	/* diagonal area corners */
	.grip {
		position: absolute;
		width: 12px;
		height: 12px;
		background: repeating-linear-gradient(45deg, #bbb 0 1px, #222 1px 3px);
		pointer-events: none;
	}

	.grip.bl {
		left: 0;
		bottom: 0;
		clip-path: polygon(0 0, 100% 100%, 0 100%);
	}

	.grip.tr {
		right: 0;
		top: 0;
		clip-path: polygon(0 0, 100% 0, 100% 100%);
	}

	.idblock {
		width: 191px;
	}

	.engine {
		width: 111px;
		margin-left: 12px;
	}

	/* 3D view */
	.view {
		position: relative;
		flex: 1;
		display: flex;
		min-height: 0;
		overflow: hidden;
	}

	.shelf {
		flex: none;
		display: flex;
		flex-direction: column;
		width: 159px;
		border-right: 1px solid #555;
		background: #727272;
	}

	.shelf .panel {
		margin-right: 4px;
	}

	.shelftop {
		flex: 3;
		display: flex;
		min-height: 0;
	}

	.operator {
		flex: 1;
		border-top: 1px solid #8c8c8c;
	}

	.tabs {
		flex: none;
		display: flex;
		flex-direction: column;
		gap: 5px;
		width: 20px;
		padding: 5px 0 0 3px;
		background: #464646;
	}

	.tabs button {
		display: flex;
		justify-content: center;
		padding: 5px 0;
		border: 1px solid #3a3a3a;
		border-right: 0;
		border-radius: 5px 0 0 5px;
		background: #5a5a5a;
	}

	.tabs span {
		line-height: 16px;
		writing-mode: vertical-rl;
		transform: rotate(180deg);
	}

	.tabs .active {
		border-color: #8a8a8a;
		background: #727272;
	}

	.tools {
		flex: 1;
	}

	.canvas {
		position: relative;
		flex: 1;
		min-width: 0;
		background: #1c1c1c;
		overflow: hidden;
	}

	.scene {
		display: block;
		width: 100%;
		height: 100%;
	}

	.hud {
		position: absolute;
		color: #fff;
	}

	.hud.top {
		top: 8px;
		left: 20px;
	}

	.hud.bottom {
		bottom: 4px;
		left: 70px;
	}

	.mark {
		position: absolute;
		border: 5px solid #e0222b;
		pointer-events: none;
	}

	.dots-mark {
		top: 311px;
		left: 493px;
		width: 75px;
		height: 91px;
	}

	.check-mark {
		top: 690px;
		right: 55px;
		width: 136px;
		height: 31px;
	}

	.note {
		position: absolute;
		top: 451px;
		left: 806px;
		width: 240px;
		height: 200px;
		padding: 3px 0 0;
		background: #fff;
		font-family: "Noto Sans CJK KR", sans-serif;
		font-size: 28px;
		font-weight: 350;
		line-height: 49px;
		white-space: nowrap;
	}

	.region {
		position: relative;
		flex: none;
		display: flex;
		gap: 1px;
		width: 180px;
		padding-right: 4px;
		border-left: 1px solid #888;
		background: #727272;
	}

	.region .panel {
		margin-right: 4px;
		margin-left: 4px;
	}

	.regionbody {
		flex: 1;
		min-width: 0;
		overflow: hidden;
	}

	.first {
		padding: 3px 3px 7px;
	}

	.track {
		flex: none;
		width: 13px;
		border: 1px solid #3f3f3f;
		border-radius: 7px;
		background: #5a5a5a;
	}

	.thumb {
		display: block;
		border-radius: 7px;
		background: linear-gradient(90deg, #a0a0a0, #7c7c7c);
	}

	.region .track {
		margin: 5px 0 4px;
		padding-top: 179px;
	}

	.region .thumb {
		height: 513px;
	}

	.lockto {
		margin-top: -2px;
	}

	.after {
		margin-top: 3px;
	}

	.itemrow {
		display: flex;
		align-items: center;
		gap: 8px;
		padding-left: 4px;
	}

	.floor {
		display: flex;
		justify-content: space-between;
	}

	.axis {
		width: 63px;
	}

	.axis .btn {
		justify-content: center;
		padding: 0;
	}

	.mode {
		width: 113px;
	}

	.orient {
		width: 73px;
	}

	.layers {
		display: grid;
		grid-template-columns: repeat(5, 10px);
		grid-template-rows: 10px 10px;
		border-radius: 4px;
		outline: 1px solid var(--line);
		outline-offset: -1px;
		overflow: hidden;
	}

	.layers button {
		border: solid var(--line);
		border-width: 0 1px 1px 0;
		background: #989898;
	}

	.layers .used {
		background: radial-gradient(circle, #f0953a 0 2px, #5a3208 3px, #989898 4px);
	}

	/* timeline */
	.timeline {
		position: relative;
		flex: none;
		height: 65px;
		background: #6b6b6b;
	}

	.strip {
		display: block;
		width: 100%;
		height: 48px;
		background: #454545;
		shape-rendering: crispEdges;
	}

	.ruler {
		position: relative;
		height: 14px;
	}

	.ruler::before {
		content: "";
		position: absolute;
		inset: 0 5px 0 4px;
		border: 1px solid #3f3f3f;
		border-radius: 7px;
		background: linear-gradient(#9a9a9a, #7d7d7d);
	}

	.ruler span {
		position: absolute;
		line-height: 15px;
		transform: translateX(-50%);
	}

	.timebar .menus {
		margin-right: -2px;
	}

	.range {
		width: 227px;
	}

	.current {
		width: 90px;
	}

	.transport {
		margin-left: 11px;
	}

	.sync {
		width: 115px;
	}

	.record {
		margin-left: 12px;
	}

	.keying {
		width: 171px;
	}

	/* outliner and properties */
	.side {
		display: flex;
		flex-direction: column;
		min-height: 0;
		border-left: 1px solid #000;
		background: #727272;
	}

	.sidebar .menus {
		margin-right: -2px;
	}

	.scenes {
		width: 119px;
	}

	.find {
		flex: 1;
	}

	.outliner {
		position: relative;
		flex: none;
		display: flex;
		height: 144px;
		padding: 1px 4px 0 0;
		border-bottom: 1px solid #000;
		overflow: hidden;
	}

	.outliner ul {
		flex: 1;
		list-style: none;
	}

	.outliner li {
		display: grid;
		grid-template-columns: 1fr 21px 20px 19px;
		height: 20px;
	}

	.outliner li:nth-child(even) {
		background: #797979;
	}

	.outliner li > i {
		display: flex;
		align-items: center;
		justify-content: center;
		border-left: 1px solid #5c5c5c;
	}

	.scene-row .cell {
		background: #7d8489;
	}

	.cell {
		position: relative;
		display: flex;
		align-items: center;
		gap: 4px;
		padding-left: 4px;
	}

	.scene-row .cell {
		gap: 0;
	}

	.scene-row .halo {
		margin-left: 8px;
	}

	.cell.lv1 {
		padding-left: 28px;
	}

	.cell.leaf {
		padding-left: 40px;
		gap: 3px;
	}

	.cell.lv2 {
		padding-left: 23px;
	}

	.lv2 .exp {
		margin-right: 5px;
	}

	.lv1::before,
	.lv2::before {
		content: "";
		position: absolute;
		top: 0;
		bottom: 0;
		left: 27px;
		border-left: 1px solid #3c3c3c;
	}

	.lv2::after {
		content: "";
		position: absolute;
		top: 10px;
		left: 32px;
		width: 11px;
		border-top: 1px solid #3c3c3c;
	}

	.cell.active {
		color: #fff;
	}

	.cell b {
		width: 1px;
		height: 12px;
		margin: 0 4px 0 5px;
		background: #333;
	}

	.lv2 b {
		margin-right: 8px;
	}

	.exp {
		position: relative;
		z-index: 1;
		flex: none;
		width: 9px;
		height: 9px;
		border: 1px solid #222;
		border-radius: 50%;
		background:
			linear-gradient(#111, #111) center / 5px 1px no-repeat,
			linear-gradient(#111, #111) center / 1px 5px no-repeat,
			#e6e6e6;
	}

	.exp.minus {
		background: linear-gradient(#111, #111) center / 5px 1px no-repeat #e6e6e6;
	}

	.halo {
		display: grid;
		place-items: center;
		width: 20px;
		height: 20px;
		border-radius: 50%;
		background: rgb(255 255 255 / 25%);
	}

	.halo.blue {
		width: 18px;
		height: 18px;
		background: #aebccf;
	}

	.outliner .track {
		margin: 3px 0 5px;
	}

	.outliner .thumb {
		height: 96px;
	}

	.props {
		padding-top: 0;
		border-bottom: 1px solid #555;
	}

	.contexts {
		margin-left: 3px;
	}

	.contexts .toggle:not(.active) :global(.icon) {
		opacity: 0.7;
	}

	.properties {
		position: relative;
		flex: 1;
		min-height: 0;
		overflow: hidden;
	}

	.crumb {
		display: flex;
		align-items: center;
		gap: 6px;
		height: 36px;
		padding-left: 10px;
	}

	.split {
		display: grid;
		grid-template-columns: 1fr 1fr;
		gap: 8px;
	}

	.split > :global(*) {
		min-width: 0;
	}

	.even {
		padding-top: 1px;
	}

	.display {
		display: grid;
		grid-template-columns: 127px 1fr;
	}

	/* overlays */
	.watermark {
		position: absolute;
		top: -6px;
		right: 191px;
		color: rgb(255 255 255 / 30%);
		font-family: "Noto Sans CJK KR", sans-serif;
		font-size: 33px;
		font-weight: 300;
		line-height: 40px;
	}

	.count {
		position: absolute;
		bottom: 75px;
		left: 12px;
		color: #ff0;
		font-family: "Noto Sans CJK KR", sans-serif;
		font-size: 88px;
		font-weight: 350;
		line-height: 84px;
		text-shadow: 2px 2px 0 #000;
	}
</style>
